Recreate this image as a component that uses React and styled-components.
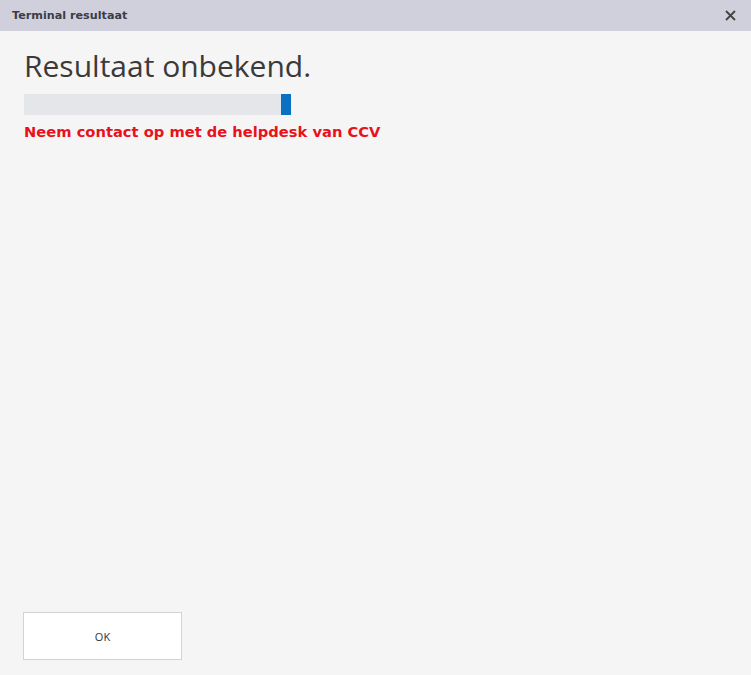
import React from 'react';
import styled, { createGlobalStyle } from 'styled-components';

const GlobalStyle = createGlobalStyle`
    html, body {
        margin: 0;
        padding: 0;
        background: #f5f5f5;
    }
    body {
        font-family: "Open Sans", "Noto Sans", sans-serif;
    }
`;

const Window = styled.div`
    width: 751px;
    height: 675px;
    display: flex;
    flex-direction: column;
    background-color: #f5f5f5;
    overflow: hidden;
`;

const TitleBar = styled.div`
    height: 31px;
    flex-shrink: 0;
    display: flex;
    align-items: center;
    justify-content: space-between;
    padding: 0 14px 0 12px;
    background-color: #cfd0dc;
`;

const Title = styled.span`
    font-family: "DejaVu Sans", sans-serif;
    font-size: 11.2px;
    font-weight: 700;
    color: #3c3c46;
`;

const CloseButton = styled.button`
    border: none;
    background: transparent;
    padding: 0;
    width: 14px;
    height: 14px;
    display: flex;
    align-items: center;
    justify-content: center;
    cursor: pointer;
`;

const Body = styled.div`
    flex: 1;
    display: flex;
    flex-direction: column;
    padding: 14px 24px 15px 24px;
`;

const Heading = styled.h1`
    margin: 0;
    font-family: "Open Sans", sans-serif;
    font-weight: 400;
    font-size: 30px;
    line-height: 42px;
    color: #3a3a3a;
`;

const ProgressTrack = styled.div`
    position: relative;
    width: 267px;
    height: 21px;
    margin-top: 7px;
    background-color: #e5e6ea;
`;

const ProgressMarker = styled.div`
    position: absolute;
    top: 0;
    bottom: 0;
    width: 10px;
    background-color: #0a70c4;
`;

const ErrorText = styled.p`
    margin: 8px 0 0 0;
    font-family: "DejaVu Sans", sans-serif;
    font-size: 14.7px;
    line-height: 18px;
    font-weight: 700;
    color: #e8121c;
`;

const Spacer = styled.div`
    flex: 1;
`;

const OkButton = styled.button`
    width: 159px;
    height: 48px;
    margin-left: -1px;
    background-color: #ffffff;
    border: 1px solid #d3d3d3;
    font-family: "Open Sans", sans-serif;
    font-size: 11px;
    color: #333;
    cursor: pointer;
`;

export default function App() {
    const position = 257;

    return (
        <Window>
            <GlobalStyle />
            <TitleBar>
                <Title>Terminal resultaat</Title>
                <CloseButton aria-label="close">
                    <svg width="11" height="11" viewBox="0 0 11 11">
                        <path d="M1 1 L10 10 M10 1 L1 10" stroke="#444" strokeWidth="1.8" />
                    </svg>
                </CloseButton>
            </TitleBar>
            <Body>
                <Heading>Resultaat onbekend.</Heading>
                <ProgressTrack>
                    <ProgressMarker style={{ left: position }} />
                </ProgressTrack>
                <ErrorText>Neem contact op met de helpdesk van CCV</ErrorText>
                <Spacer />
                <OkButton>OK</OkButton>
            </Body>
        </Window>
    );
}
